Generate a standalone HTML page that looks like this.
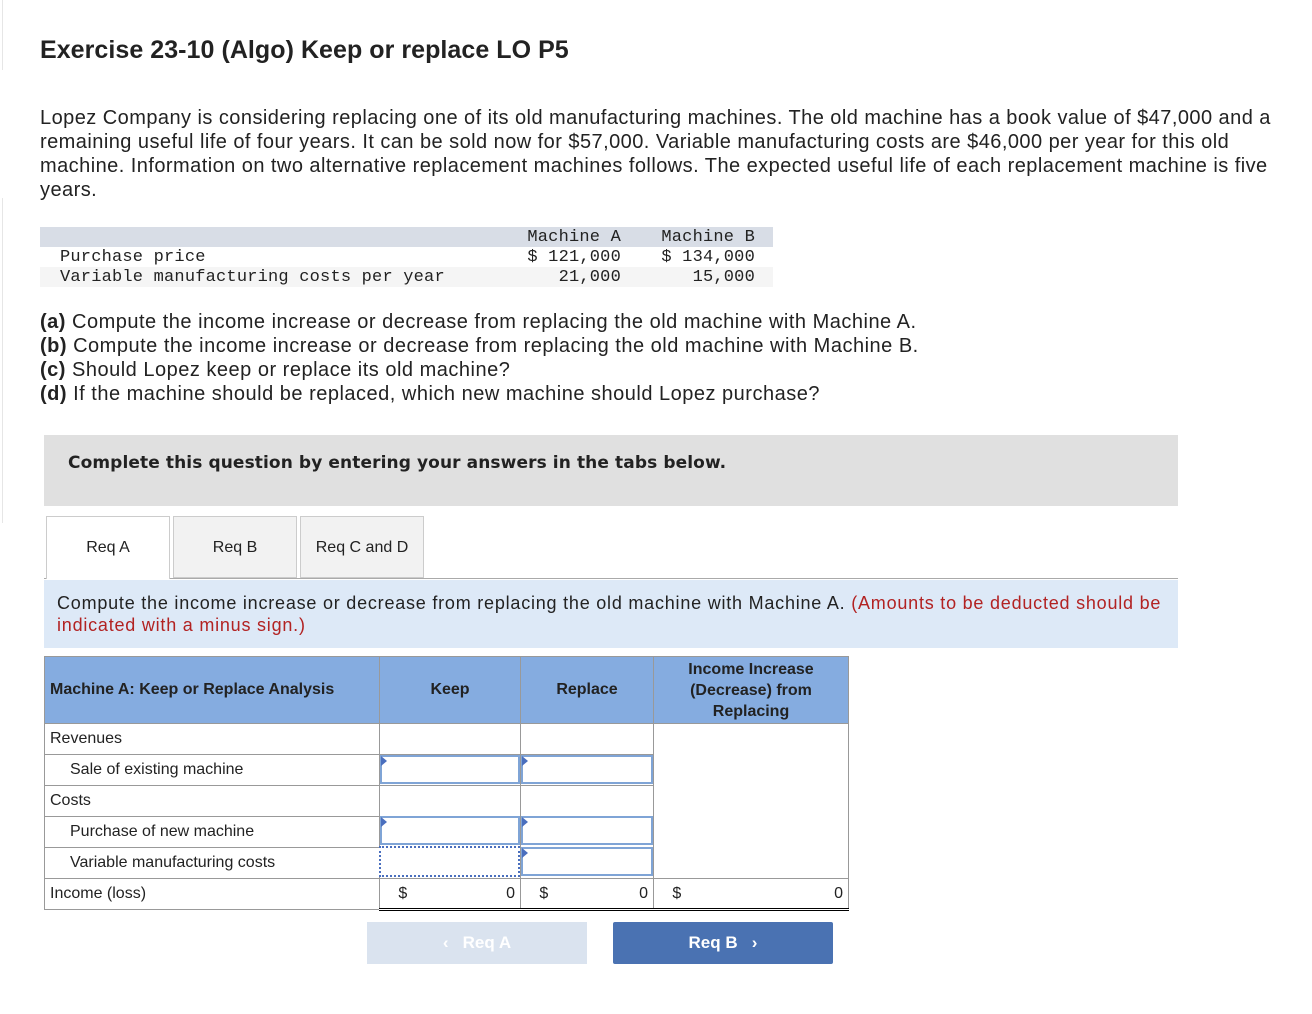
<!DOCTYPE html>
<html><head><style>
*{margin:0;padding:0;box-sizing:border-box}
body{width:1312px;height:1014px;background:#fff;font-family:"Liberation Sans",Arial,sans-serif;color:#222;position:relative;overflow:hidden}
.a{position:absolute}
h1{position:absolute;left:40px;top:36px;font-size:25px;font-weight:bold;letter-spacing:0.05px}
.p{left:40px;top:106px;width:1250px;font-size:20px;line-height:24px;letter-spacing:0.45px}
.mono{font-family:"Liberation Mono",monospace;font-size:17px;letter-spacing:0.2px}
.q{left:40px;top:310px;font-size:20px;line-height:24px;letter-spacing:0.5px}
.tab{position:absolute;top:516px;height:62px;border:1px solid #ccc;background:#f2f2f2;font-size:16px;text-align:center;line-height:62px}
td{border:1px solid #999;font-size:16px;padding:0 5px;height:31px}
.inp{position:absolute;border:2px solid #7fa4d6;background:#fff}
.inp:before{content:"";position:absolute;left:-1px;top:-1px;border-left:6px solid #4a6fbe;border-top:5px solid transparent;border-bottom:5px solid transparent}
</style></head><body>
<div class="a" style="left:0;top:0;width:3px;height:70px;border-right:1px solid #e6e6e6"></div>
<div class="a" style="left:0;top:198px;width:3px;height:325px;border-right:1px solid #e6e6e6"></div>
<h1>Exercise 23-10 (Algo) Keep or replace LO P5</h1>
<div class="a p">Lopez Company is considering replacing one of its old manufacturing machines. The old machine has a book value of $47,000 and a remaining useful life of four years. It can be sold now for $57,000. Variable manufacturing costs are $46,000 per year for this old machine. Information on two alternative replacement machines follows. The expected useful life of each replacement machine is five years.</div>
<div class="a" style="left:40px;top:227px;width:733px;height:20px;background:#d8dde6"></div>
<div class="a" style="left:40px;top:267px;width:733px;height:20px;background:#f5f5f5"></div>
<div class="a mono" style="left:60px;top:248px;line-height:20px">Purchase price<br>Variable manufacturing costs per year</div>
<div class="a mono" style="left:480px;top:228px;width:141px;text-align:right;line-height:20px">Machine A<br>$ 121,000<br>21,000</div>
<div class="a mono" style="left:614px;top:228px;width:141px;text-align:right;line-height:20px">Machine B<br>$ 134,000<br>15,000</div>
<div class="a q"><b>(a)</b> Compute the income increase or decrease from replacing the old machine with Machine A.<br><b>(b)</b> Compute the income increase or decrease from replacing the old machine with Machine B.<br><b>(c)</b> Should Lopez keep or replace its old machine?<br><b>(d)</b> If the machine should be replaced, which new machine should Lopez purchase?</div>
<div class="a" style="left:44px;top:435px;width:1134px;height:71px;background:#e0e0e0"></div>
<div class="a" style="left:68px;top:453px;font-size:17px;font-weight:bold;font-family:'DejaVu Sans',sans-serif;letter-spacing:0.1px">Complete this question by entering your answers in the tabs below.</div>
<div class="a" style="left:44px;top:578px;width:1134px;border-top:1px solid #aaa"></div>
<div class="tab" style="left:46px;width:124px;background:#fff;border-bottom:none;height:63px">Req A</div>
<div class="tab" style="left:173px;width:124px">Req B</div>
<div class="tab" style="left:300px;width:124px">Req C and D</div>
<div class="a" style="left:44px;top:580px;width:1134px;height:68px;background:#dde9f7"></div>
<div class="a" style="left:57px;top:592px;width:1115px;font-size:18px;line-height:22px;letter-spacing:0.78px">Compute the income increase or decrease from replacing the old machine with Machine A. <span style="color:#b22222">(Amounts to be deducted should be indicated with a minus sign.)</span></div>
<table class="a" style="left:44px;top:656px;border-collapse:collapse;width:805px">
<tr style="background:#85ace0;font-weight:bold;height:67px"><td style="width:335px;height:67px">Machine A: Keep or Replace Analysis</td><td style="width:141px;text-align:center">Keep</td><td style="width:133px;text-align:center">Replace</td><td style="text-align:center;line-height:21px">Income Increase<br>(Decrease) from<br>Replacing</td></tr>
<tr><td>Revenues</td><td></td><td></td><td rowspan="5" style="border-bottom:1px solid #999"></td></tr>
<tr><td style="padding-left:25px">Sale of existing machine</td><td></td><td></td></tr>
<tr><td>Costs</td><td></td><td></td></tr>
<tr><td style="padding-left:25px">Purchase of new machine</td><td></td><td></td></tr>
<tr><td style="padding-left:25px">Variable manufacturing costs</td><td></td><td></td></tr>
<tr><td>Income (loss)</td><td style="border-bottom:3px double #000">&nbsp;&nbsp;&nbsp;$<span style="float:right">0</span></td><td style="border-bottom:3px double #000">&nbsp;&nbsp;&nbsp;$<span style="float:right">0</span></td><td style="border-bottom:3px double #000">&nbsp;&nbsp;&nbsp;$<span style="float:right">0</span></td></tr>
</table>
<div class="inp" style="left:380px;top:755px;width:140px;height:29px"></div>
<div class="inp" style="left:521px;top:755px;width:132px;height:29px"></div>
<div class="inp" style="left:380px;top:816px;width:140px;height:29px"></div>
<div class="inp" style="left:521px;top:816px;width:132px;height:29px"></div>
<div class="a" style="left:379px;top:846px;width:141px;height:31px;border:2px dotted #4a6fbe;background:#fff"></div>
<div class="inp" style="left:521px;top:847px;width:132px;height:29px"></div>
<div class="a" style="left:367px;top:922px;width:220px;height:42px;background:#dae3ef;color:#fff;font-weight:bold;font-size:17px;text-align:center;line-height:42px">‹&nbsp;&nbsp;&nbsp;Req A</div>
<div class="a" style="left:613px;top:922px;width:220px;height:42px;background:#4a72b2;color:#fff;font-weight:bold;font-size:17px;text-align:center;line-height:42px;border-radius:2px">Req B&nbsp;&nbsp;&nbsp;›</div>
</body></html>
